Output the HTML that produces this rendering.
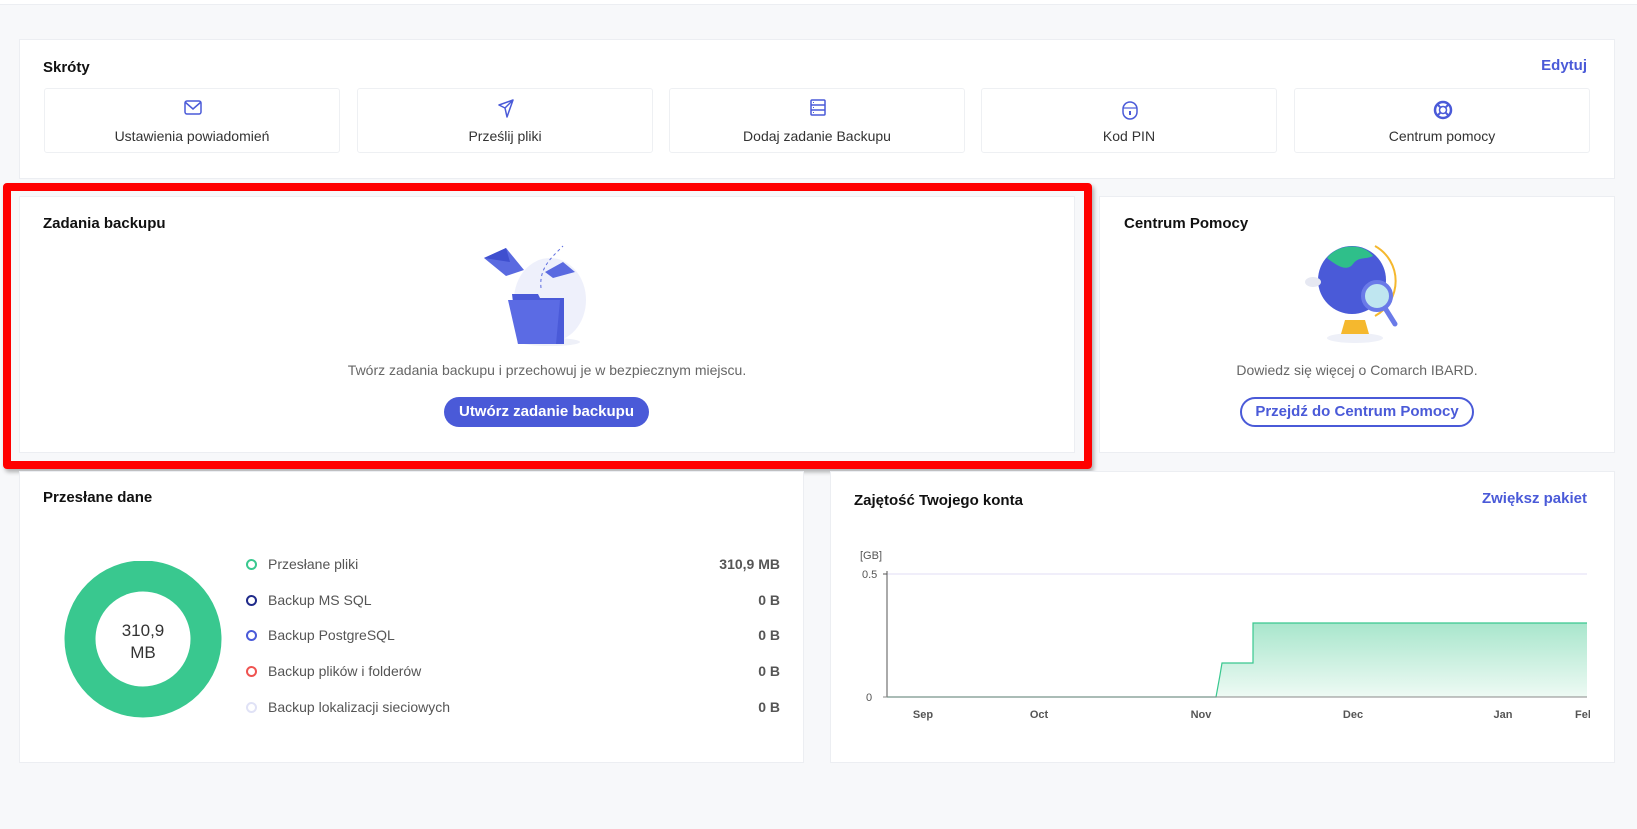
<!DOCTYPE html>
<html><head><meta charset="utf-8"><style>
*{box-sizing:border-box;margin:0;padding:0}
body{width:1637px;height:829px;background:#f7f8fa;font-family:"Liberation Sans",sans-serif;position:relative;overflow:hidden;color:#222}
.card{position:absolute;background:#fff;border:1px solid #eceef2}
.t{position:absolute;font-weight:bold;font-size:15px;color:#111}
.tile{position:absolute;top:88px;width:296px;height:65px;border:1px solid #eef0f3;border-radius:3px;text-align:center;font-size:14px;color:#333}
.tile svg{position:absolute;left:137px;top:10px}
.tile span{position:absolute;left:0;right:0;top:39px}
.blue{color:#4a5ad8}
.btn{position:absolute;height:30px;border-radius:15px;font-size:15px;font-weight:bold;text-align:center;line-height:30px}
.leg{position:absolute;left:246px;width:534px;font-size:14px;color:#555}
.leg i{position:absolute;left:0;top:3px;width:11px;height:11px;border-radius:50%;border:2.5px solid}
.leg span{position:absolute;left:22px}
.leg b{position:absolute;right:0;font-weight:bold;color:#555}
.ax{position:absolute;font-size:11px;color:#555;font-weight:bold}
</style></head><body>
<div style="position:absolute;left:0;right:0;top:0;height:5px;background:#fff;border-bottom:1px solid #eceef2"></div>

<div class="card" style="left:19px;top:39px;width:1596px;height:140px"></div>
<div class="t" style="left:43px;top:59px">Skróty</div>
<div class="blue" style="position:absolute;right:50px;top:57px;font-size:15px;font-weight:bold">Edytuj</div>
<div class="tile" style="left:44px"><svg width="22" height="18" viewBox="0 0 22 18"><rect x="3" y="2" width="16" height="13" rx="2" fill="none" stroke="#4a5ad8" stroke-width="1.5"/><path d="M3 3l8 7 8-7" fill="none" stroke="#4a5ad8" stroke-width="1.5"/></svg><span>Ustawienia powiadomień</span></div>
<div class="tile" style="left:357px"><svg width="22" height="20" viewBox="0 0 22 20"><path d="M4 6L18 1 12 18 10 9z M10 9L18 1" fill="none" stroke="#4a5ad8" stroke-width="1.5" stroke-linejoin="round"/></svg><span>Prześlij pliki</span></div>
<div class="tile" style="left:669px"><svg width="22" height="18" viewBox="0 0 22 18"><rect x="4" y="1" width="14" height="15" rx="1" fill="none" stroke="#4a5ad8" stroke-width="1.5"/><path d="M4 6h14M4 11h14" stroke="#4a5ad8" stroke-width="1.5"/><path d="M6 3.5h1M6 8.5h1M6 13.5h1" stroke="#4a5ad8"/></svg><span>Dodaj zadanie Backupu</span></div>
<div class="tile" style="left:981px"><svg width="22" height="22" viewBox="0 0 22 22"><rect x="4" y="3" width="14" height="17" rx="7" fill="none" stroke="#4a5ad8" stroke-width="1.5"/><path d="M4 9h14" stroke="#4a5ad8" stroke-width="1.2"/><path d="M11 12v4" stroke="#4a5ad8" stroke-width="2"/></svg><span>Kod PIN</span></div>
<div class="tile" style="left:1294px"><svg width="22" height="22" viewBox="0 0 22 22"><circle cx="11" cy="11" r="8" fill="none" stroke="#4a5ad8" stroke-width="2.5"/><circle cx="11" cy="11" r="3.5" fill="none" stroke="#4a5ad8" stroke-width="1.5"/><path d="M5 5l4 4M17 5l-4 4M5 17l4-4M17 17l-4-4" stroke="#4a5ad8" stroke-width="2"/></svg><span>Centrum pomocy</span></div>

<div class="card" style="left:19px;top:196px;width:1056px;height:257px"></div>
<div class="t" style="left:43px;top:215px">Zadania backupu</div>
<svg style="position:absolute;left:480px;top:238px" width="140" height="110" viewBox="0 0 140 110">
<ellipse cx="70" cy="62" rx="36" ry="42" fill="#eef0fb"/>
<ellipse cx="70" cy="104" rx="30" ry="4" fill="#eef0f8"/>
<path d="M4 20l22-10 18 22-18 6z" fill="#5a6ae0"/><path d="M4 20l22-10 4 14z" fill="#3f4fcf"/>
<path d="M65 34l18-10 12 10-22 6z" fill="#5a6ae0"/>
<path d="M61 50c-2-20 10-30 22-42" fill="none" stroke="#5a6ae0" stroke-dasharray="3 3"/>
<path d="M32 56h26l2 4h24v46H38z" fill="#4a5ad8"/>
<path d="M28 62h52l-4 44H38z" fill="#5b6be4"/>
</svg>
<div style="position:absolute;left:19px;width:1056px;top:362px;text-align:center;font-size:14px;color:#666">Twórz zadania backupu i przechowuj je w bezpiecznym miejscu.</div>
<div class="btn" style="left:444px;top:397px;width:205px;background:#4a5ad8;color:#fff">Utwórz zadanie backupu</div>

<div style="position:absolute;left:3px;top:183px;width:1089px;height:286px;border:8px solid #f00;border-radius:4px;box-shadow:2px 3px 4px rgba(0,0,0,.3)"></div>

<div class="card" style="left:1099px;top:196px;width:516px;height:257px"></div>
<div class="t" style="left:1124px;top:215px">Centrum Pomocy</div>
<svg style="position:absolute;left:1305px;top:238px" width="105" height="110" viewBox="0 0 105 110">
<ellipse cx="50" cy="100" rx="28" ry="5" fill="#eef0f8"/>
<path d="M40 82h20l4 14H36z" fill="#f5b82e"/>
<circle cx="47" cy="42" r="34" fill="#4a5ad8"/>
<path d="M22 20c10-14 36-16 46-2-8 4-14 0-20 8-6 8-16 2-26-6z" fill="#2fbf8a"/>
<path d="M70 8a40 40 0 0 1 0 70" fill="none" stroke="#f5b82e" stroke-width="2"/>
<circle cx="72" cy="58" r="14" fill="#bfe6f0" stroke="#6a7ae8" stroke-width="4"/>
<path d="M80 70l10 16" stroke="#6a7ae8" stroke-width="5" stroke-linecap="round"/>
<ellipse cx="8" cy="44" rx="8" ry="5" fill="#e6e8f2"/>
</svg>
<div style="position:absolute;left:1099px;width:516px;top:362px;text-align:center;font-size:14px;color:#666">Dowiedz się więcej o Comarch IBARD.</div>
<div class="btn blue" style="left:1240px;top:397px;width:234px;border:2px solid #4a5ad8;line-height:26px">Przejdź do Centrum Pomocy</div>

<div class="card" style="left:19px;top:471px;width:785px;height:292px"></div>
<div class="t" style="left:43px;top:489px">Przesłane dane</div>
<svg style="position:absolute;left:63px;top:561px" width="160" height="160"><circle cx="80" cy="78" r="63" fill="none" stroke="#39c88f" stroke-width="31"/></svg>
<div style="position:absolute;left:103px;width:80px;top:620px;text-align:center;font-size:17px;line-height:22px;color:#333">310,9<br>MB</div>
<div class="leg" style="top:556px"><i style="border-color:#39c88f"></i><span>Przesłane pliki</span><b>310,9 MB</b></div>
<div class="leg" style="top:592px"><i style="border-color:#1f2a8a"></i><span>Backup MS SQL</span><b>0 B</b></div>
<div class="leg" style="top:627px"><i style="border-color:#4a5ad8"></i><span>Backup PostgreSQL</span><b>0 B</b></div>
<div class="leg" style="top:663px"><i style="border-color:#ef5350"></i><span>Backup plików i folderów</span><b>0 B</b></div>
<div class="leg" style="top:699px"><i style="border-color:#e0e2f6"></i><span>Backup lokalizacji sieciowych</span><b>0 B</b></div>

<div class="card" style="left:830px;top:471px;width:785px;height:292px"></div>
<div class="t" style="left:854px;top:492px">Zajętość Twojego konta</div>
<div class="blue" style="position:absolute;right:50px;top:490px;font-size:15px;font-weight:bold">Zwiększ pakiet</div>
<svg style="position:absolute;left:850px;top:545px" width="740" height="185">
<defs><linearGradient id="g" x1="0" y1="0" x2="0" y2="1"><stop offset="0" stop-color="#a8e6cc"/><stop offset="1" stop-color="#eefaf4"/></linearGradient></defs>
<text x="10" y="14" font-size="11" fill="#555" font-family="Liberation Sans">[GB]</text>
<text x="12" y="33" font-size="11" fill="#555" font-family="Liberation Sans">0.5</text>
<text x="16" y="156" font-size="11" fill="#555" font-family="Liberation Sans">0</text>
<line x1="37" y1="29" x2="737" y2="29" stroke="#e0def4"/>
<path d="M366 152L370 130 372 118H403V78H737V152z" fill="url(#g)" stroke="none"/>
<path d="M37 152H366L370 130 372 118H403V78H737" fill="none" stroke="#39c88f" stroke-width="1.2"/>
<line x1="37" y1="26" x2="37" y2="152" stroke="#555"/>
<line x1="33" y1="29" x2="37" y2="29" stroke="#555"/>
<line x1="33" y1="152" x2="737" y2="152" stroke="#888"/>
<g font-size="11" fill="#555" font-weight="bold" font-family="Liberation Sans" text-anchor="middle">
<text x="73" y="173">Sep</text><text x="189" y="173">Oct</text><text x="351" y="173">Nov</text><text x="503" y="173">Dec</text><text x="653" y="173">Jan</text><text x="733" y="173">Fel</text></g>
</svg>
</body></html>
